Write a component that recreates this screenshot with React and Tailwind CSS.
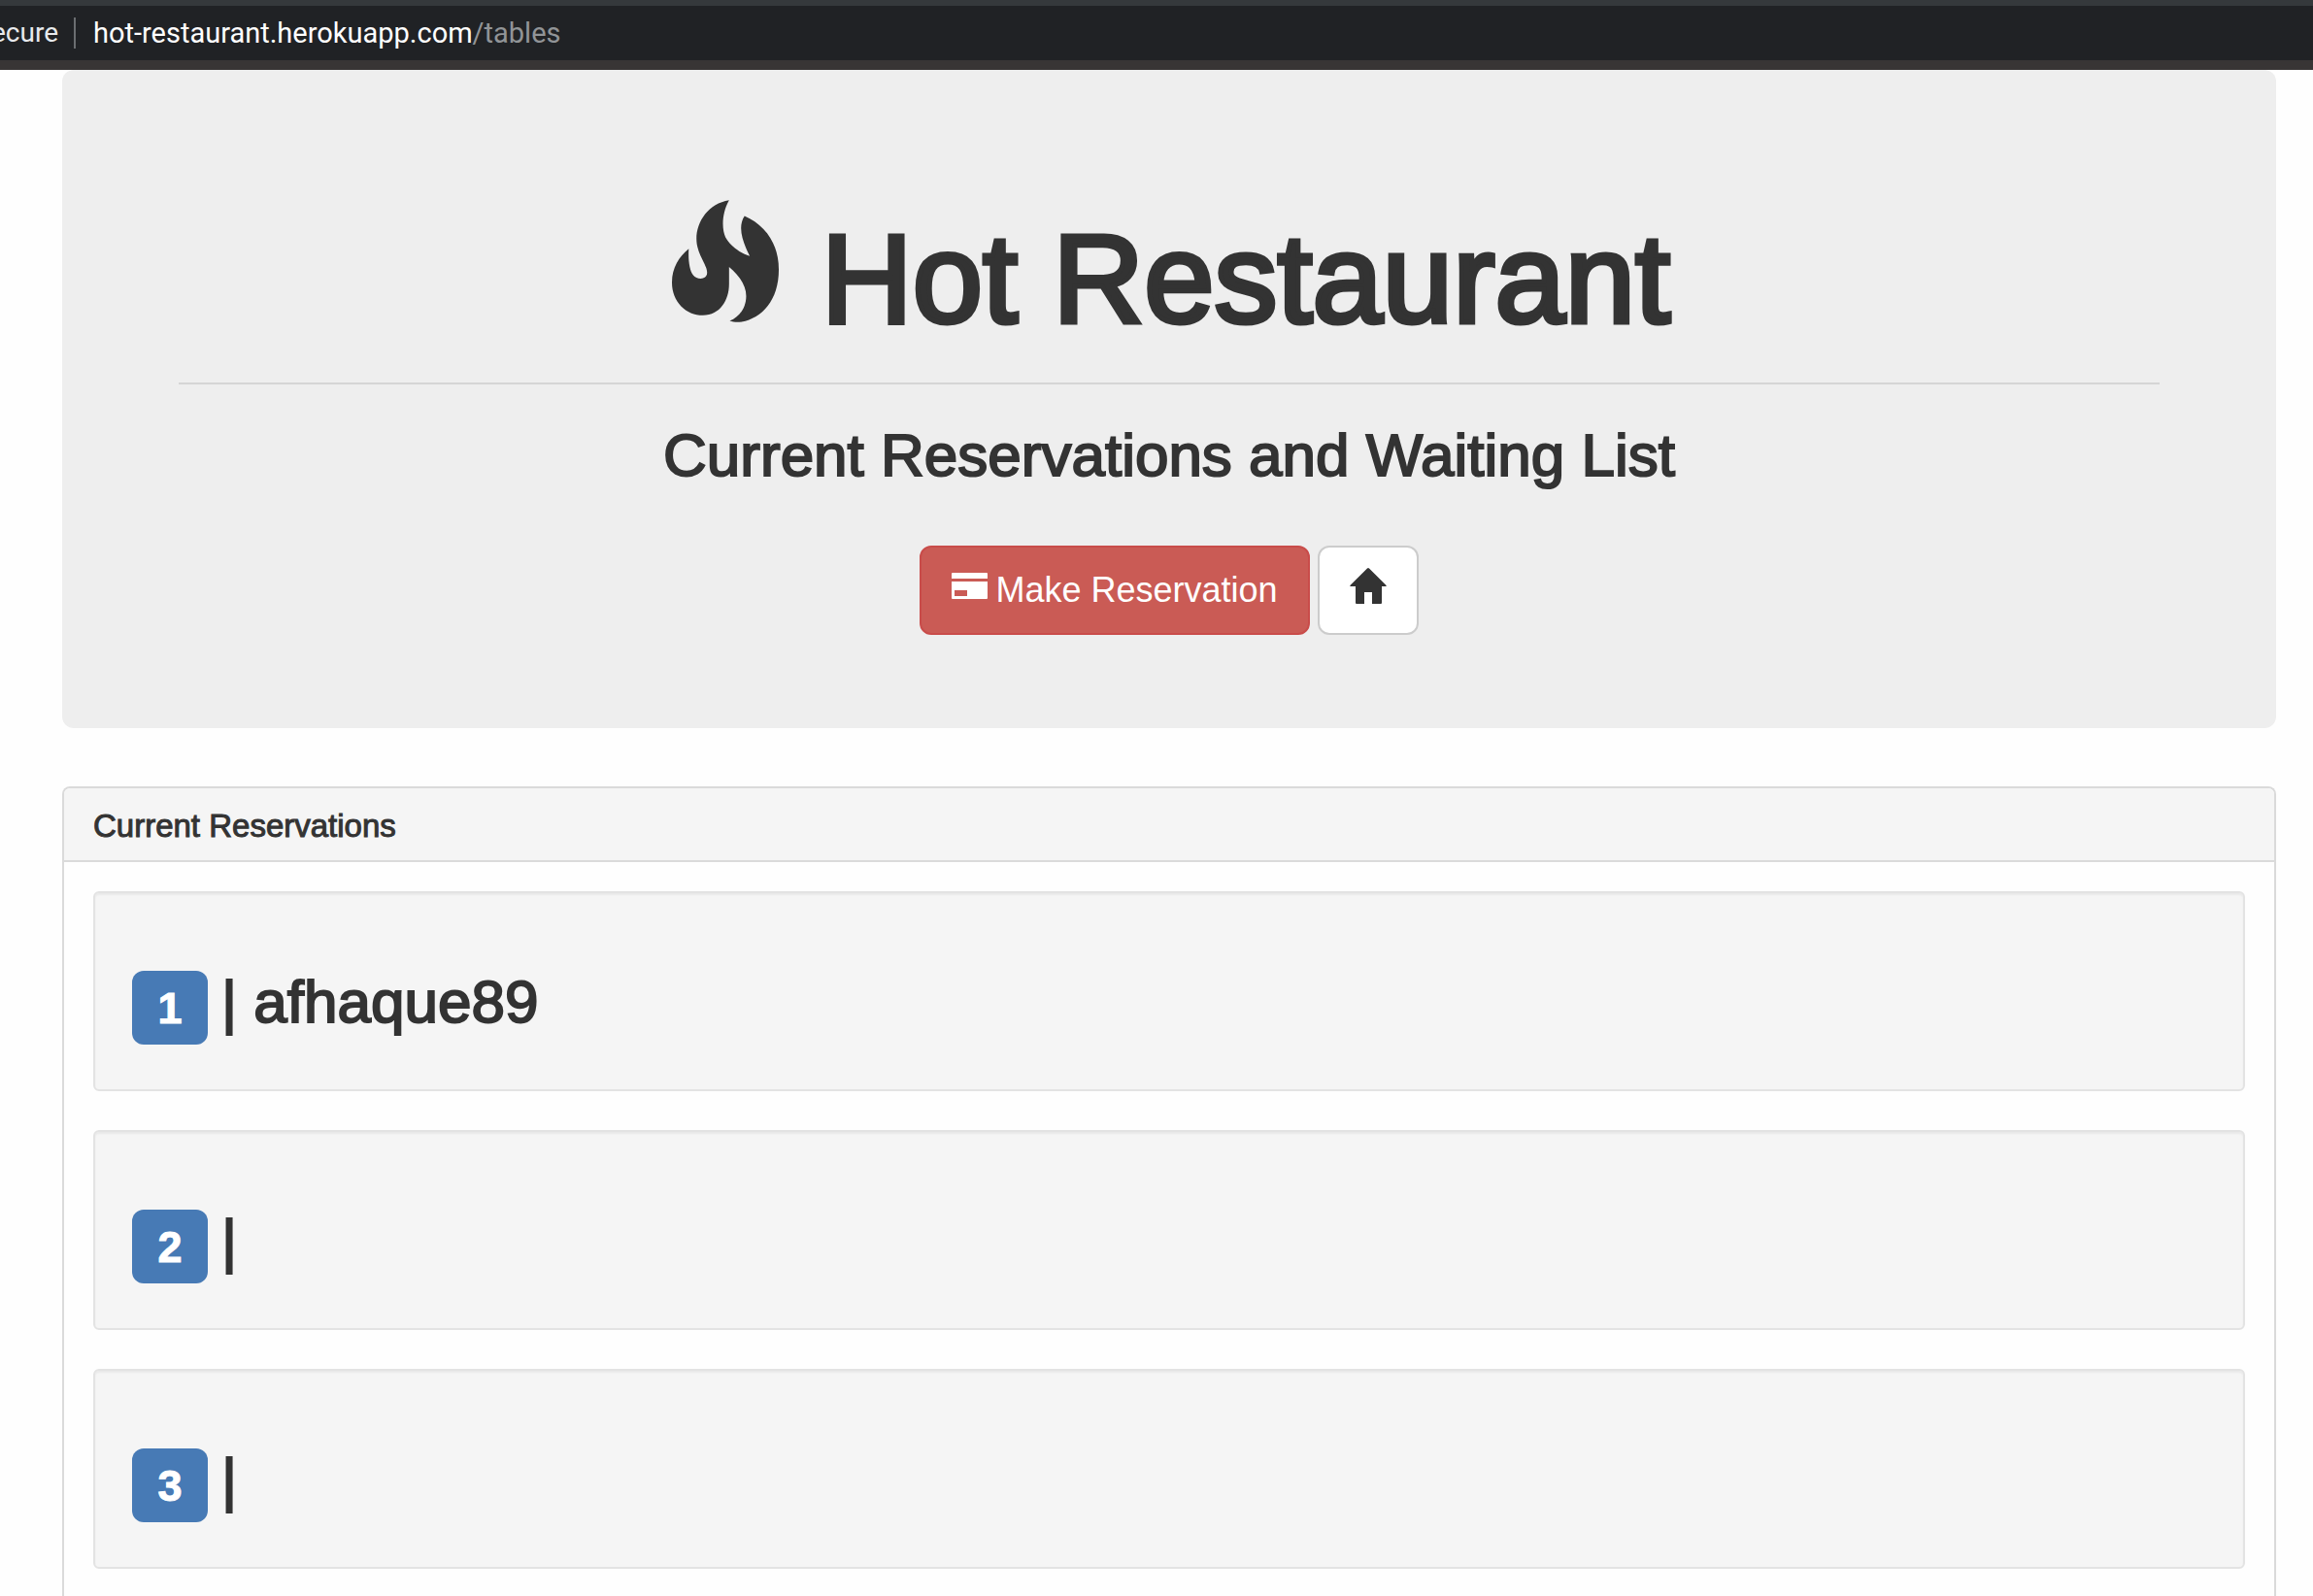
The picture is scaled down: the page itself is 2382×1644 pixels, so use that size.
const reservations = [
  { id: 1, name: "afhaque89" },
  { id: 2, name: "" },
  { id: 3, name: "" },
];

function FireIcon() {
  return (
    <svg
      viewBox="96 75 331 378"
      className="mr-11 ml-1 inline-block h-[126px] w-[110px] align-baseline"
      fill="currentColor"
      aria-hidden="true"
    >
      <path d="M273 75C210 85 172 140 172 195C172 225 185 248 197 273C204 288 208 300 202 310C194 322 172 321 162 308C150 293 146 260 148 226C118 250 96 285 96 330C96 390 140 432 192 432C245 432 273 385 273 335V282C305 308 326 340 326 372C326 408 305 438 275 449C285 453 300 454 312 452C375 440 427 385 427 290C427 210 385 152 321 124C300 155 312 200 337 248C300 237 275 212 262 190C250 165 250 115 273 75Z" />
    </svg>
  );
}

function CardIcon() {
  return (
    <svg viewBox="0 0 37 27" className="mb-[10px] h-[27px] w-[37px]" fill="currentColor" aria-hidden="true">
      <path d="M1 0H36Q37 0 37 1V6H0V1Q0 0 1 0Z" />
      <path fillRule="evenodd" d="M0 9H37V26Q37 27 36 27H1Q0 27 0 26ZM3 18V24H16V18Z" />
    </svg>
  );
}

function HomeIcon() {
  return (
    <svg viewBox="0 0 38 37" className="mb-[10px] h-[37px] w-[38px]" fill="currentColor" aria-hidden="true">
      <path d="M18 .5Q19 -.4 20 .5L37.600 18Q38.200 19 37 19H33V36Q33 37 32 37H23V25H15V37H7Q6 37 6 36V19H1Q-.2 19 .4 18Z" />
    </svg>
  );
}

function AddressBar() {
  return (
    <header className="flex h-[72px] items-center border-t-[6px] border-b-[10px] border-t-[#35393c] border-b-[#383535] bg-[#202225] font-[Roboto,sans-serif] text-[29px] leading-8">
      <div className="flex w-15 justify-end overflow-hidden text-[28px] text-[#e8eaed]">ecure</div>
      <div className="ml-4 h-8 w-[2px] bg-[#6b6e71]" />
      <div className="ml-[18px] whitespace-nowrap text-white">
        hot-restaurant.herokuapp.com<span className="text-[#919497]">/tables</span>
      </div>
    </header>
  );
}

function Reservation({ id, name }) {
  return (
    <li className="rounded-md border-2 border-[#e3e3e3] bg-[#f5f5f5] px-[38px] pt-20 pb-[46px] shadow-[inset_0_2px_2px_rgba(0,0,0,0.05)]">
      <h2 className="flex items-start text-[62px] leading-[64px] [-webkit-text-stroke:2px_#333]">
        <span className="flex h-[76px] w-[78px] items-center justify-center rounded-xl bg-[#477ab5] text-[45px] leading-none font-bold text-white [-webkit-text-stroke:1px_#fff]">
          {id}
        </span>
        <span className="ml-[14px]">|&nbsp;{name}</span>
      </h2>
    </li>
  );
}

export default function App() {
  return (
    <div className="min-h-screen bg-[#fefefe] font-['Liberation_Sans',Arial,sans-serif] text-[#333]">
      <AddressBar />
      <main className="mr-[38px] ml-16">
        <section className="rounded-xl bg-[#eee] px-30 pt-[134px] pb-24 text-center">
          <h1 className="text-[130px] leading-[138px] [-webkit-text-stroke:5px_#333]">
            <FireIcon />
            Hot Restaurant
          </h1>
          <hr className="mt-[38px] border-t-2 border-[#d5d5d5]" />
          <h2 className="mt-10 text-[62px] leading-[66px] [-webkit-text-stroke:2px_#333]">
            Current Reservations and Waiting List
          </h2>
          <div className="mt-15 flex justify-center gap-2">
            <a
              href="/reserve"
              className="flex h-[92px] items-center gap-2 rounded-xl border-2 border-[#c94c4a] bg-[#ca5b55] px-[31px] text-[36px] leading-12 text-white"
            >
              <CardIcon />
              Make Reservation
            </a>
            <a
              href="/"
              aria-label="Home"
              className="flex h-[92px] w-[104px] items-center justify-center rounded-xl border-2 border-[#ccc] bg-white"
            >
              <HomeIcon />
            </a>
          </div>
        </section>
        <section className="mt-15 rounded-t-lg border-2 border-b-0 border-[#dadada] bg-[#fefefe]">
          <h3 className="rounded-t-md border-b-2 border-[#dadada] bg-[#f5f5f5] px-[30px] pt-[21px] pb-[17px] text-[33px] leading-9 [-webkit-text-stroke:1px_#333]">
            Current Reservations
          </h3>
          <ul className="flex flex-col gap-10 p-[30px]">
            {reservations.map((r) => (
              <Reservation key={r.id} id={r.id} name={r.name} />
            ))}
          </ul>
        </section>
      </main>
    </div>
  );
}
